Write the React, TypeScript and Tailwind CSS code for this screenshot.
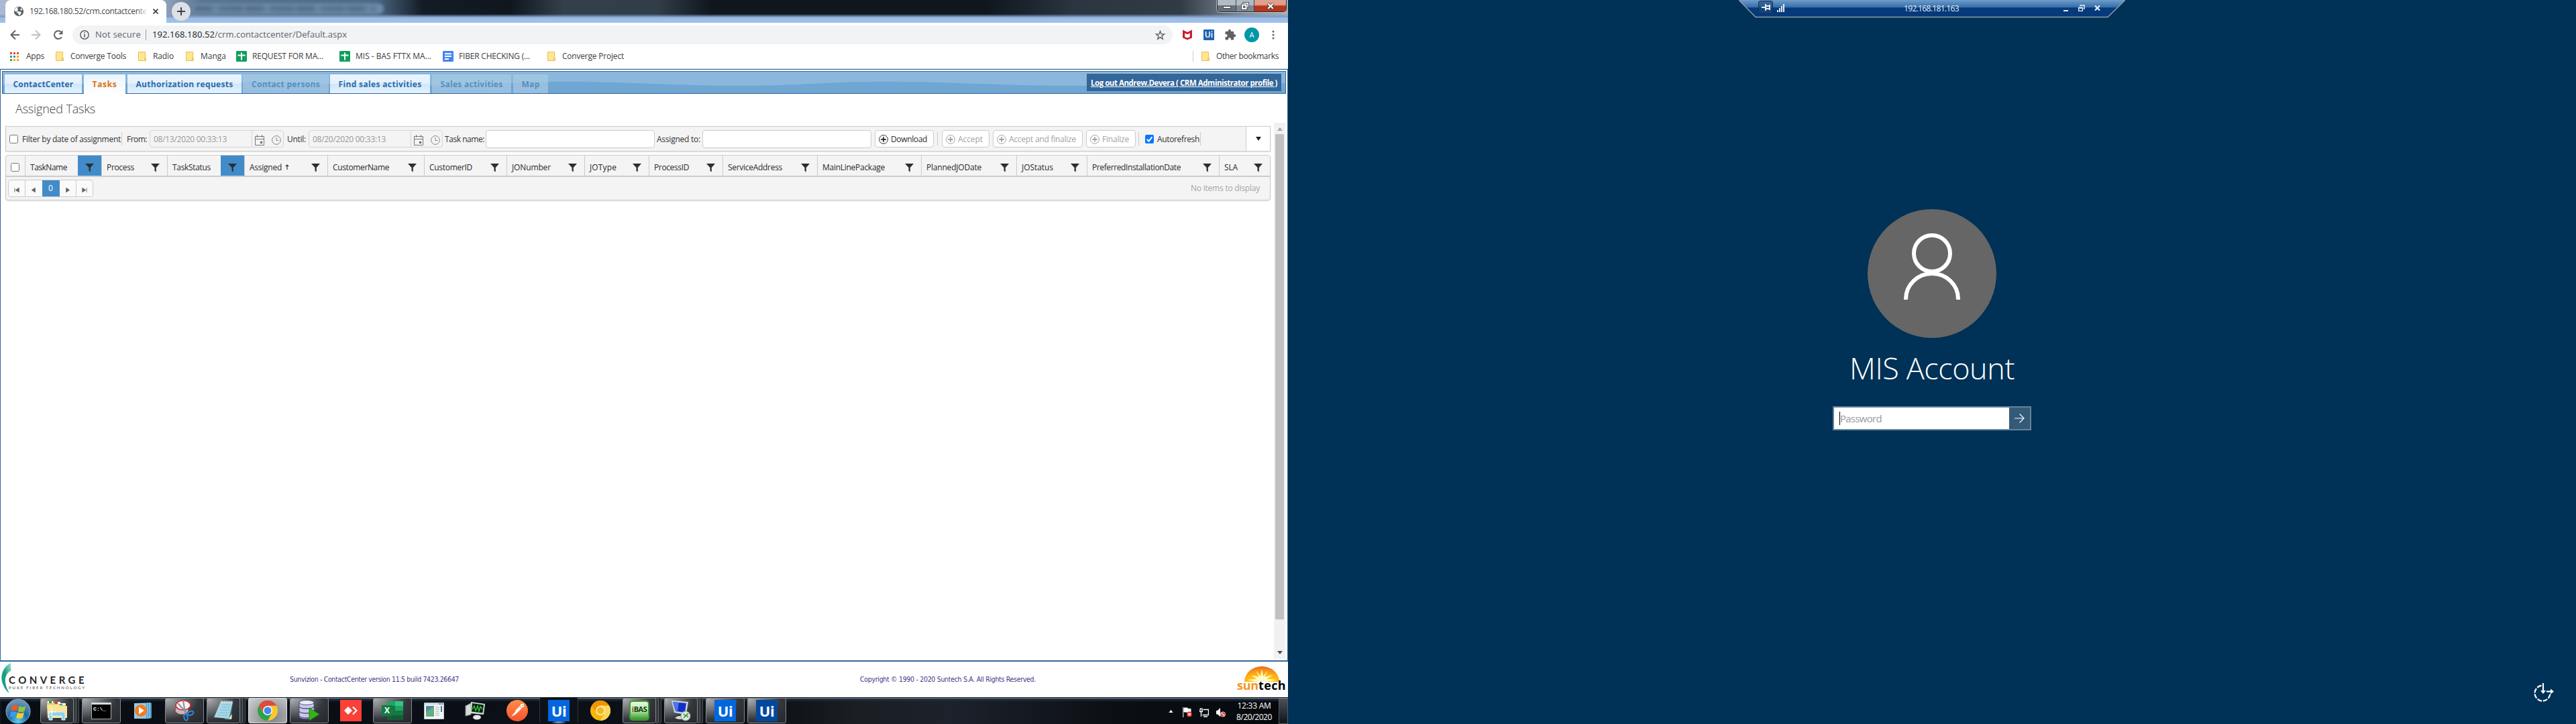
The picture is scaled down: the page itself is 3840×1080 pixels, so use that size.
import React, { useLayoutEffect, useRef, useState } from "react";

/* Text whose tracking adapts so that it fills the width of its box. */
function Fit({ className, children }: { className: string; children: string }) {
  const outer = useRef<HTMLSpanElement>(null);
  const inner = useRef<HTMLSpanElement>(null);
  const [spacing, setSpacing] = useState(0);
  useLayoutEffect(() => {
    if (!outer.current || !inner.current) return;
    const room = outer.current.getBoundingClientRect().width;
    const natural = inner.current.getBoundingClientRect().width;
    setSpacing((room - natural) / children.length);
  }, [children]);
  return (
    <span ref={outer} className={"block shrink-0 whitespace-nowrap " + className}>
      <span ref={inner} style={{ letterSpacing: spacing }}>
        {children}
      </span>
    </span>
  );
}

const Folder = ({ className }: { className: string }) => (
  <svg viewBox="0 0 12 14" className={"h-[14px] w-[12px] shrink-0 " + className}>
    <path d="M.5.5h10v9h1v4H.5z" fill="#ffe694" stroke="#e9c04c" />
    <path d="M9.5 13V9.7h1.8" fill="none" stroke="#e9c04c" />
  </svg>
);
const Sheet = ({ className }: { className: string }) => (
  <svg viewBox="0 0 16 16" className={"size-4 shrink-0 " + className}>
    <rect width="16" height="16" rx="1.2" fill="#10a05c" />
    <path d="M2.5 6.5h11M8 2.5v11" stroke="#fff" strokeWidth="1.9" />
  </svg>
);
const Doc = ({ className }: { className: string }) => (
  <svg viewBox="0 0 16 16" className={"size-4 shrink-0 " + className}>
    <rect width="16" height="16" rx="1.2" fill="#4285f4" />
    <path d="M3 4.2h10M3 8h10M3 12h6" stroke="#fff" strokeWidth="1.9" />
  </svg>
);

function TitleStrip() {
  return (
    <div className="relative flex h-[34px] shrink-0 overflow-hidden bg-[#0f161e]">
      <div className="absolute inset-0 bg-[linear-gradient(90deg,#a9bad2_0px,#8b9fb8_250px,#5b7590_300px,#4d6984_560px,#131c26_630px,#0f161e_760px,#33404c_840px,#313d49_980px,#0f161e_1060px,#0f161e_1470px,#2a3541_1600px,#303b46_1760px,#87939f_1860px,#a5b1bd_1920px)]" />
      <div className="absolute left-[284px] top-[5px] h-[16px] w-[288px] rounded-full bg-[#6d8bab] blur-[2px]" />
      <div className="absolute left-[290px] top-[9px] h-[8px] w-[270px] bg-[repeating-linear-gradient(90deg,#3f566e_0px,#41586f_24px,#6d8bab_32px,#4a627b_38px,#40586f_70px,#6d8bab_76px)] opacity-60 blur-[3px]" />
      <div className="absolute inset-x-0 bottom-0 h-[13px] bg-[linear-gradient(180deg,transparent_0px,#7e9cc2_4px,#9cbde6_6px,#a0c0ea_13px)]" />
      <div className="relative ml-2 flex h-[34px] w-[240px] items-center rounded-t-[8px] bg-white">
        <svg viewBox="0 0 16 16" className="ml-3 size-4 shrink-0">
          <circle cx="8" cy="8" r="7.2" fill="#5f6368" />
          <path d="M7.5 1.8 5.6 4l1.7 1.2L5.2 7.6 8 8.3l3 .2.7 2-2.6 3.4-1-.2-.5-2.4-1.7-.9-1-2.2-3.3-.8C1.9 4 4.200 1.600 7.500 1.800zM11 3l2.300 2.100-.6 1.600-2.200-1z" fill="#fff" />
        </svg>
        <div className="relative ml-2 w-[176px]">
          <Fit className="w-[175px] text-[12px] leading-5 text-[#45484c]">192.168.180.52/crm.contactcente</Fit>
          <div className="absolute right-0 top-0 h-5 w-4 bg-linear-to-r from-transparent to-white" />
        </div>
        <svg viewBox="0 0 8 8" className="ml-2 size-[8px] shrink-0" stroke="#3c4043" strokeWidth="1.7">
          <path d="M.5.5l7 7m0-7l-7 7" />
        </svg>
      </div>
      <div className="relative ml-[8px] mt-[3px] flex size-7 items-center justify-center rounded-full bg-[#dde1e7]">
        <svg viewBox="0 0 12 12" className="size-3" stroke="#3c4043" strokeWidth="2">
          <path d="M6 0v12M0 6h12" />
        </svg>
      </div>
      <div className="relative ml-auto mr-[2px] flex h-[18px] w-[104px] overflow-hidden rounded-b-[5px] border border-t-0 border-[#272e35] text-white shadow-[0_0_0_1px_#b4bec7]">
        <div className="flex w-[28px] items-center justify-center border-r border-[#3d4650] bg-linear-to-b from-[#b3bcc4] from-45% to-[#65717d] to-50%">
          <div className="mt-1 h-[4px] w-[12px] border border-[#474a52] bg-white" />
        </div>
        <div className="flex w-[27px] items-center justify-center border-r border-[#3d4650] bg-linear-to-b from-[#b3bcc4] from-45% to-[#7d8994] to-50%">
          <svg viewBox="0 0 12 12" className="size-3" fill="#fff" stroke="#474a52">
            <path d="M3 .5h8.500v8H3z" />
            <path d="M.5 3H9v8.500H.5z" />
            <path d="M3.500 6h2.500v2.500H3.500z" fill="#8c959e" />
          </svg>
        </div>
        <div className="flex flex-1 items-center justify-center bg-linear-to-b from-[#e0a08e] from-40% to-[#b8351d] to-55%">
          <svg viewBox="0 0 12 10" className="h-[10px] w-3">
            <path d="M2 1l8 8m0-8L2 9" stroke="#4b3f44" strokeWidth="4" />
            <path d="M2.300 1.300l7.400 7.400m0-7.400L2.300 8.700" stroke="#fff" strokeWidth="2.300" />
          </svg>
        </div>
      </div>
    </div>
  );
}

function Toolbar() {
  return (
    <div className="flex h-[36px] shrink-0 items-center bg-white">
      <svg viewBox="0 0 80 16" className="ml-[15px] h-4 w-[80px] shrink-0" fill="none" strokeWidth="2">
        <path d="M14 8H1.500M8 1.500L1.500 8 8 14.500" stroke="#5f6368" />
        <path d="M32 8h12.500M38 1.500L44.500 8 38 14.500" stroke="#bdc0c4" />
        <path d="M77 11.200A6 6 0 1 1 76.500 4" stroke="#5f6368" />
        <path d="M78.500 1v6.300h-6.300z" fill="#5f6368" />
      </svg>
      <div className="ml-[13px] flex h-7 w-[1640px] items-center rounded-full bg-[#f1f3f4]">
        <svg viewBox="0 0 14 14" className="ml-[11px] size-[14px] shrink-0" fill="none" stroke="#5f6368" strokeWidth="1.500">
          <circle cx="7" cy="7" r="6.200" />
          <path d="M7 6v4.500M7 3.300v1.500" strokeWidth="1.700" />
        </svg>
        <Fit className="ml-[9px] w-[68px] text-[13px] text-[#5f6368]">Not secure</Fit>
        <div className="ml-[7px] h-4 w-px bg-[#9aa0a6]" />
        <div className="ml-[9px] flex text-[13px]">
          <Fit className="w-[93px] text-[#202124]">192.168.180.52</Fit>
          <Fit className="w-[197px] text-[#5f6368]">/crm.contactcenter/Default.aspx</Fit>
        </div>
        <svg viewBox="0 0 16 16" className="ml-auto mr-[11px] size-[15px] shrink-0" fill="none" stroke="#5f6368" strokeWidth="1.500">
          <path d="M8 1.500l1.700 4.600 4.800.2-3.800 3 1.300 4.800L8 11.300l-4 2.800 1.300-4.800-3.800-3 4.800-.2z" />
        </svg>
      </div>
      <svg viewBox="0 0 14 16" className="ml-[15px] h-4 w-[14px] shrink-0">
        <path d="M0 .5l7 3.500 7-3.500v12L7 15.500 0 12.500zM3.200 5.400v5.500L7 12.600l3.800-1.700V5.400L7 7.200z" fill="#c8202f" fillRule="evenodd" />
      </svg>
      <div className="ml-[17px] flex size-4 items-center justify-center rounded-[1px] bg-[#1f63ae] text-[12px] font-semibold leading-4 text-white">Ui</div>
      <svg viewBox="0 0 24 24" className="ml-[15px] size-[18px] shrink-0" fill="#5f6368">
        <path d="M20.500 11H19V7a2 2 0 0 0-2-2h-4V3.500a2.500 2.500 0 0 0-5 0V5H4a2 2 0 0 0-2 2v3.800h1.500a2.700 2.700 0 0 1 0 5.400H2V20a2 2 0 0 0 2 2h3.800v-1.500a2.700 2.700 0 0 1 5.400 0V22H17a2 2 0 0 0 2-2v-4h1.500a2.500 2.500 0 0 0 0-5z" />
      </svg>
      <div className="ml-[12px] flex size-[22px] items-center justify-center rounded-full bg-[#0097a7] text-[11px] text-white">A</div>
      <svg viewBox="0 0 4 14" className="ml-[19px] h-[14px] w-1" fill="#5f6368">
        <circle cx="2" cy="2" r="1.500" />
        <circle cx="2" cy="7" r="1.500" />
        <circle cx="2" cy="12" r="1.500" />
      </svg>
    </div>
  );
}

function Bookmarks() {
  return (
    <div className="flex h-[32px] shrink-0 items-center bg-white pb-[4px] text-[12px] text-[#3c4043]">
      <svg viewBox="0 0 13 13" className="ml-[15px] size-[13px] shrink-0">
        {["#ea4335", "#ea4335", "#ea4335", "#34a853", "#4285f4", "#f5a80b", "#34a853", "#f5a80b", "#f5a80b"].map((c, i) => (
          <rect key={i} x={(i % 3) * 5} y={Math.floor(i / 3) * 5} width="3" height="3" fill={c} />
        ))}
      </svg>
      <Fit className="ml-[11px] w-[27px]">Apps</Fit>
      <Folder className="ml-[17px]" />
      <Fit className="ml-[10px] w-[83px]">Converge Tools</Fit>
      <Folder className="ml-[18px]" />
      <Fit className="ml-[10px] w-[31px]">Radio</Fit>
      <Folder className="ml-[18px]" />
      <Fit className="ml-[10px] w-[38px]">Manga</Fit>
      <Sheet className="ml-[15px]" />
      <Fit className="ml-[8px] w-[106px]">REQUEST FOR MA...</Fit>
      <Sheet className="ml-[24px]" />
      <Fit className="ml-[8px] w-[113px]">MIS - BAS FTTX MA...</Fit>
      <Doc className="ml-[17px]" />
      <Fit className="ml-[8px] w-[106px]">FIBER CHECKING (...</Fit>
      <Folder className="ml-[26px]" />
      <Fit className="ml-[10px] w-[92px]">Converge Project</Fit>
      <div className="ml-auto h-4 w-px bg-[#c9ccd0]" />
      <Folder className="ml-[12px]" />
      <Fit className="ml-[10px] mr-[14px] w-[93px]">Other bookmarks</Fit>
    </div>
  );
}

const tabOn = "bg-[linear-gradient(180deg,#eaf4fe_0%,#e4f1fd_48%,#cfe6fb_52%,#e6f3fe_100%)] text-[#2d6ba6] ";
const tabOff = "bg-[#a9cbe6]/70 text-[#5590c0] ";
const tabs = [
  { label: "ContactCenter", box: tabOn + "ml-[3px] w-[115px]", text: "w-[90px]" },
  { label: "Tasks", box: "ml-[3px] w-[62px] h-[30px] pb-[2px] bg-linear-to-b from-[#e9f4fe] to-white text-[#e0700f]", text: "w-[37px]" },
  { label: "Authorization requests", box: tabOn + "ml-[3px] w-[170px]", text: "w-[145px]" },
  { label: "Contact persons", box: tabOff + "ml-[2px] w-[128px]", text: "w-[102px]" },
  { label: "Find sales activities", box: tabOn + "ml-[2px] w-[149px]", text: "w-[124px]" },
  { label: "Sales activities", box: tabOff + "ml-[3px] w-[118px]", text: "w-[93px]" },
  { label: "Map", box: tabOff + "ml-[3px] w-[52px]", text: "w-[27px]" },
];

function TabBar() {
  return (
    <div className="relative mx-[2px] mt-[2px] flex h-[34px] shrink-0 border border-[#33679c] bg-[#8ab7db]">
      <svg viewBox="0 0 1914 32" preserveAspectRatio="none" className="absolute inset-0 h-full w-full">
        <path d="M0 20C120 20 220 15 340 15S520 21 620 21 740 15 840 15s160 6 260 6 120-6 220-6 160 6 300 6 180-4 294-4V32H0z" fill="#6fa6d2" />
      </svg>
      <div className="relative flex pt-[4px]">
        {tabs.map((t) => (
          <div key={t.label} className={"flex h-[28px] shrink-0 items-center justify-center text-[12px] font-bold " + t.box}>
            <Fit className={"pt-px " + t.text}>{t.label}</Fit>
          </div>
        ))}
      </div>
      <div className="relative ml-auto mr-[6px] mt-[3px] flex h-[26px] w-[290px] items-center justify-center bg-[#336699]">
        <Fit className="w-[278px] pt-px text-[11.500px] font-bold text-white underline">Log out Andrew.Devera ( CRM Administrator profile )</Fit>
      </div>
    </div>
  );
}

const Sep = ({ className }: { className: string }) => <div className={"h-5 w-px shrink-0 bg-[#ccc] " + className} />;

function DateBox({ value, className }: { value: string; className: string }) {
  return (
    <div className={"flex h-[26px] w-[200px] shrink-0 items-center rounded-[4px] border border-[#d6d6d6] " + className}>
      <Fit className="ml-[5px] w-[109px] pt-[2px] text-[#999]">{value}</Fit>
      <div className="ml-[37px] h-6 w-px bg-[#d6d6d6]" />
      <svg viewBox="0 0 14 16" className="ml-[4px] mt-[3px] h-4 w-[14px]" fill="none" stroke="#777">
        <path d="M.5 2.500h13v13H.5zM0 6.500h14M3.500 0v4M10.500 0v4" />
        <path d="M8 10h3v3H8z" fill="#666" stroke="none" />
      </svg>
      <svg viewBox="0 0 14 14" className="ml-[11px] mt-[3px] size-[14px]" fill="none" stroke="#888">
        <circle cx="7" cy="7" r="6.400" />
        <path d="M7 3v4.500h3.500" />
      </svg>
    </div>
  );
}

function ToolButton({ label, box, text, off }: { label: string; box: string; text: string; off?: boolean }) {
  return (
    <div className={"flex h-[26px] shrink-0 items-center rounded-[4px] border border-[#ccc] bg-white " + (off ? "text-[#a3a3a3] " : "text-[#2e2e2e] ") + box}>
      <svg viewBox="0 0 14 14" className="ml-[5px] mt-[2px] size-[14px] shrink-0" fill="none" stroke="currentColor">
        <circle cx="7" cy="7" r="6.400" />
        <path d="M7 3.300v7.400M3.300 7h7.400" strokeWidth="1.800" />
      </svg>
      <Fit className={"ml-[4px] pt-[2px] " + text}>{label}</Fit>
    </div>
  );
}

function FilterBar() {
  return (
    <div className="flex h-[38px] w-[1886px] shrink-0 items-center border border-[#ccc] bg-[#f4f4f4] text-[12px] text-[#333] shadow-[0_1px_2px_#0000001f]">
      <div className="ml-[5px] size-[13px] shrink-0 rounded-[2.500px] border border-[#767676] bg-white" />
      <Fit className="ml-[6px] w-[147px] pt-px">Filter by date of assignment</Fit>
      <Sep className="ml-[1px]" />
      <Fit className="ml-[7px] w-[30px] pt-[2px]">From:</Fit>
      <DateBox className="ml-[4px]" value="08/13/2020 00:33:13" />
      <Fit className="ml-[5px] w-[28px] pt-[2px]">Until:</Fit>
      <DateBox className="ml-[4px]" value="08/20/2020 00:33:13" />
      <Fit className="ml-[3px] w-[59px] pt-[2px]">Task name:</Fit>
      <div className="ml-[2px] h-[27px] w-[252px] shrink-0 rounded-[4px] border border-[#ccc] bg-white" />
      <Fit className="ml-[3px] w-[65px] pt-[2px]">Assigned to:</Fit>
      <div className="ml-[3px] h-[27px] w-[252px] shrink-0 rounded-[4px] border border-[#ccc] bg-white" />
      <ToolButton label="Download" box="ml-[5px] w-[88px]" text="w-[54px]" />
      <Sep className="ml-[5px]" />
      <ToolButton off label="Accept" box="ml-[6px] w-[71px]" text="w-[37px]" />
      <ToolButton off label="Accept and finalize" box="ml-[5px] w-[134px]" text="w-[100px]" />
      <ToolButton off label="Finalize" box="ml-[5px] w-[74px]" text="w-[40px]" />
      <Sep className="ml-[4px]" />
      <svg viewBox="0 0 13 13" className="ml-[9px] size-[13px] shrink-0">
        <rect width="13" height="13" rx="2" fill="#0a75ff" />
        <path d="M2.800 6.800l2.700 2.900 4.900-6.400" fill="none" stroke="#fff" strokeWidth="2" />
      </svg>
      <Fit className="ml-[5px] w-[63px] pt-px">Autorefresh</Fit>
      <Sep className="ml-[1px]" />
      <div className="ml-auto flex h-[36px] w-[36px] items-center justify-center border-l border-[#ccc] bg-white">
        <svg viewBox="0 0 8 6" className="h-[6px] w-2" fill="#222">
          <path d="M0 0h8L4 6z" />
        </svg>
      </div>
    </div>
  );
}

const columns = [
  { label: "TaskName", box: "w-[114px]", text: "w-[55px]", hot: true },
  { label: "Process", box: "w-[98px]", text: "w-[41px]" },
  { label: "TaskStatus", box: "w-[115px]", text: "w-[57px]", hot: true },
  { label: "Assigned", box: "w-[124px]", text: "w-[48px]", sorted: true },
  { label: "CustomerName", box: "w-[144px]", text: "w-[84px]" },
  { label: "CustomerID", box: "w-[123px]", text: "w-[64px]" },
  { label: "JONumber", box: "w-[116px]", text: "w-[58px]" },
  { label: "JOType", box: "w-[96px]", text: "w-[40px]" },
  { label: "ProcessID", box: "w-[110px]", text: "w-[52px]" },
  { label: "ServiceAddress", box: "w-[141px]", text: "w-[81px]" },
  { label: "MainLinePackage", box: "w-[155px]", text: "w-[93px]" },
  { label: "PlannedJODate", box: "w-[142px]", text: "w-[82px]" },
  { label: "JOStatus", box: "w-[105px]", text: "w-[47px]" },
  { label: "PreferredInstallationDate", box: "w-[197px]", text: "w-[132px]" },
  { label: "SLA", box: "w-[76px]", text: "w-[20px]" },
];

const pagerIcons = [
  "M1 1.500v7M8 1.500v7L2.500 5z",
  "M7 1.500v7L1.500 5z",
  "",
  "M3 1.500v7L8.500 5z",
  "M9 1.500v7M2 1.500v7L7.500 5z",
];

function Grid() {
  return (
    <div className="mt-[5px] flex h-[68px] w-[1886px] shrink-0 flex-col overflow-hidden rounded-[4px] border border-[#ccc] bg-[#f4f4f4] text-[12px] text-[#2b2b2b] shadow-[0_1px_2px_#0000001f]">
      <div className="flex h-[32px] shrink-0 border-b-2 border-[#ccc]">
        <div className="flex w-[28px] shrink-0 items-center justify-center pr-[2px] pt-1">
          <div className="size-[13px] rounded-[2.500px] border border-[#767676] bg-white" />
        </div>
        {columns.map((c) => (
          <div key={c.label} className={"flex shrink-0 items-center border-l border-[#ccc] pl-[7px] " + c.box}>
            <Fit className={"mt-[5px] " + c.text}>{c.label}</Fit>
            {c.sorted && (
              <svg viewBox="0 0 6 8" className="ml-[5px] mt-1 h-2 w-[6px]" fill="none" stroke="#333" strokeWidth="1.200">
                <path d="M3 8V1M.8 3.200L3 1l2.200 2.200" />
              </svg>
            )}
            <div className={"ml-auto flex h-full w-[35px] items-center justify-center " + (c.hot ? "bg-[#428bca]" : "")}>
              <svg viewBox="0 0 13 13" className="mt-[6px] size-[13px]" fill="#2e2e2e">
                <path d="M0 0h13L7.800 6v6.500L5.500 11V6z" />
              </svg>
            </div>
          </div>
        ))}
      </div>
      <div className="flex flex-1 items-center">
        <div className="ml-[3px] flex h-[26px] w-[127px] overflow-hidden rounded-[4px] border border-[#ccc] bg-[#fafafa]">
          {pagerIcons.map((d, i) =>
            d ? (
              <div key={i} className={"flex flex-1 items-center justify-center " + (i === 1 || i === 4 ? "border-l border-[#ccc]" : "")}>
                <svg viewBox="0 0 10 10" className="mt-1 size-[9px]" fill="#666" stroke="#666" strokeWidth="1">
                  <path d={d} />
                </svg>
              </div>
            ) : (
              <div key={i} className="flex w-[26px] items-center justify-center bg-[#428bca] text-white">0</div>
            )
          )}
        </div>
        <Fit className="ml-auto mr-[15px] w-[103px] text-[#a5a5a5]">No items to display</Fit>
      </div>
    </div>
  );
}

function Scrollbar() {
  return (
    <div className="mr-[3px] flex h-[800px] w-[17px] flex-col items-center justify-between bg-[#f1f1f1]">
      <svg viewBox="0 0 8 5" className="mt-[7px] h-[5px] w-2" fill="#a3a3a3">
        <path d="M0 5h8L4 0z" />
      </svg>
      <div className="mb-auto mt-[5px] h-[724px] w-[13px] bg-[#c1c1c1]" />
      <svg viewBox="0 0 8 5" className="mb-[7px] h-[5px] w-2" fill="#505050">
        <path d="M0 0h8L4 5z" />
      </svg>
    </div>
  );
}

function Footer() {
  return (
    <div className="flex h-[53px] shrink-0 bg-white font-['DejaVu_Sans_Condensed','DejaVu_Sans',sans-serif] text-[10.500px] text-[#3e3787]">
      <div className="flex w-[432px]">
        <svg viewBox="0 0 16 48" className="ml-[2px] mt-[2px] h-[46px] w-4 shrink-0">
          <defs>
            <linearGradient id="leaf" x1="0" y1="1" x2="1" y2="0">
              <stop offset="0" stopColor="#1f9f87" />
              <stop offset=".5" stopColor="#15a085" />
              <stop offset="1" stopColor="#a8dccf" />
            </linearGradient>
          </defs>
          <path d="M14 0C2 6-4 22 3 35c2 5 5 9 9 12C7 38 3 27 8 18c2-3 4-5 7-6z" fill="url(#leaf)" />
        </svg>
        <div className="ml-[-5px] mt-[19px] flex flex-col font-['Lato',sans-serif]">
          <Fit className="w-[117px] text-[15px] font-bold leading-[16px] text-[#262626]">CONVERGE</Fit>
          <Fit className="w-[115px] text-[6px] font-bold leading-[7px] text-[#777]">PURE FIBER TECHNOLOGY</Fit>
        </div>
      </div>
      <Fit className="mt-[19px] w-[252px]">Sunvizion - ContactCenter version 11.5 build 7423.26647</Fit>
      <Fit className="ml-[598px] mt-[19px] w-[262px]">Copyright © 1990 - 2020 Suntech S.A. All Rights Reserved.</Fit>
      <div className="ml-auto mr-[3px] mt-[7px] flex w-[73px] flex-col items-center">
        <svg viewBox="0 0 52 23" className="h-[23px] w-[52px] shrink-0">
          <defs>
            <radialGradient id="sun" cx=".5" cy="1" r="1">
              <stop offset="0" stopColor="#ffe81a" />
              <stop offset=".5" stopColor="#fdb515" />
              <stop offset="1" stopColor="#ee6a23" />
            </radialGradient>
          </defs>
          <path d="M0 23a26 23 0 0 1 52 0z" fill="url(#sun)" />
          <path d="M4 20l15-1-9-6 12 3-5-10 7 9 2-11 2 11 7-9-5 10 12-3-9 6 15 1-15 3H19z" fill="#fffbd0" />
        </svg>
        <div className="mt-[-2px] flex font-['Open_Sans',sans-serif] text-[18px] font-bold leading-[15px]">
          <Fit className="w-[32px] text-[#f7941d]">sun</Fit>
          <Fit className="w-[41px] text-black">tech</Fit>
        </div>
      </div>
    </div>
  );
}

const UiTile = ({ className }: { className: string }) => (
  <div className={"flex size-8 items-center justify-center pb-px text-[22px] font-bold leading-8 tracking-[-0.5px] text-white " + className}>Ui</div>
);

const ExplorerIcon = () => (
  <svg viewBox="0 0 32 30" className="h-[30px] w-8">
    <path d="M1 2h10l2 3h16v19H3z" fill="#e8c75e" />
    <path d="M2 1h8v3H2zM13 2h8v3h-8zM20 4h9v3h-9z" fill="#fff" />
    <path d="M4 1h4v3H4z" fill="#2b9b3d" />
    <path d="M13 2h4v3h-4z" fill="#d63b26" />
    <path d="M20 5h4v2h-4z" fill="#2990d4" />
    <path d="M1 6h18l2 2h10v18H2z" fill="#f8e596" />
    <path d="M4 29V20q0-3 3-3h18q3 0 3 3v9h-5v-6H9v6z" fill="#8fd0ee" stroke="#d6f0fb" />
    <path d="M8 11v12M2 17h12" stroke="#fff" strokeWidth="1.200" />
  </svg>
);
const CmdIcon = () => (
  <div className="h-[25px] w-[30px] border border-[#a9b0b6] border-t-[3px] border-t-[#d4dce4] bg-black pl-[2px] pt-[2px] font-['Liberation_Mono',monospace] text-[8px] font-bold leading-[9px] text-white">C:\_</div>
);
const MediaIcon = () => (
  <svg viewBox="0 0 28 26" className="h-[26px] w-7">
    <path d="M1 2l24-1 2 1v22l-3 1H1z" fill="#4c9bc8" />
    <path d="M1 2h18v23H1z" fill="#8ecbea" />
    <path d="M21 1v24M24 1v23" stroke="#b8def2" />
    <circle cx="11" cy="13" r="9" fill="#f47b20" />
    <path d="M8 7.500l8 5.500-8 5.500z" fill="#fff" />
  </svg>
);
const SnipIcon = () => (
  <svg viewBox="0 0 30 32" className="h-8 w-[30px]">
    <ellipse cx="11" cy="15" rx="10" ry="7" fill="#b9bcc0" stroke="#c22a2a" />
    <ellipse cx="13" cy="8" rx="11" ry="7" fill="#f3f3f5" stroke="#d8262c" strokeWidth="1.600" />
    <path d="M5 5l14 15M13 1l3 18" stroke="#8a8f94" strokeWidth="2" />
    <ellipse cx="24" cy="20" rx="4.500" ry="2.800" transform="rotate(-25 24 20)" fill="none" stroke="#2b84d6" strokeWidth="2.200" />
    <ellipse cx="17" cy="26" rx="2.600" ry="4.600" transform="rotate(-15 17 26)" fill="none" stroke="#2b84d6" strokeWidth="2.200" />
  </svg>
);
const NotepadIcon = () => (
  <svg viewBox="0 0 32 30" className="h-[30px] w-8">
    <path d="M12 2h18l-3 25-2 2L18 28z" fill="#3e7f93" />
    <path d="M12 2h18l-6 25L2 25z" fill="#a8d8e4" />
    <path d="M14 6h13M13 10h13M11 14h14M9 18h15M7 22h16" stroke="#7fbccc" />
    <path d="M12 2h18" stroke="#dfe6e8" strokeWidth="3" strokeDasharray="1.500 1" />
    <path d="M24 27l5-7-1 8z" fill="#fff3b0" />
  </svg>
);
const ChromeIcon = () => (
  <svg viewBox="0 0 30 30" className="size-[30px]">
    <circle cx="15" cy="15" r="15" fill="#fbc62d" />
    <path d="M15 15L2 7.500A15 15 0 0 1 28 7.500H15z" fill="#dd4b3e" />
    <path d="M2 7.500a15 15 0 0 0 13 22.500l6.200-11L8.800 19z" fill="#2ba24c" />
    <path d="M2 7.500L9 19l6-11.500h13A15 15 0 0 0 2 7.500z" fill="#dd4b3e" />
    <circle cx="15" cy="15" r="7" fill="#fff" />
    <circle cx="15" cy="15" r="5.500" fill="#4688f1" />
  </svg>
);
const DbIcon = () => (
  <svg viewBox="0 0 32 32" className="size-8">
    <path d="M1 4v21c0 5 22 5 22 0V4z" fill="#c9c9e4" />
    <path d="M1 10c2 4 20 4 22 0M1 17c2 4 20 4 22 0M1 24c2 4 20 4 22 0" fill="none" stroke="#4b4b82" strokeWidth="1.500" />
    <ellipse cx="12" cy="4" rx="11" ry="3.500" fill="#ececf8" stroke="#51518a" />
    <path d="M1 4v21c0 5 22 5 22 0V4" fill="none" stroke="#51518a" />
    <path d="M16 12l15 9.500L16 31z" fill="#35b318" stroke="#1c7d0c" />
  </svg>
);
const AnyDeskIcon = () => (
  <svg viewBox="0 0 32 32" className="size-8">
    <path d="M0 0h32v32H0z" fill="#fb4136" />
    <path d="M6 16l6-6 6 6-6 6z" fill="#fff" />
    <path d="M19 10.500l5.500 5.500-5.500 5.500" fill="none" stroke="#fff" strokeWidth="2.200" />
  </svg>
);
const ExcelIcon = () => (
  <div className="relative h-7 w-8">
    <svg viewBox="0 0 32 28" className="h-7 w-8">
      <path d="M8 0h12v7H8z" fill="#21a366" />
      <path d="M20 0h12v7H20z" fill="#33c481" />
      <path d="M8 7h12v14H8z" fill="#107c41" />
      <path d="M20 7h12v7H20z" fill="#21a366" />
      <path d="M20 14h12v7H20z" fill="#107c41" />
      <path d="M8 21h24v7H8z" fill="#185c37" />
    </svg>
    <div className="absolute left-0 top-[6px] flex size-4 items-center justify-center bg-[#107c41] text-[12px] font-bold text-white">X</div>
  </div>
);
const WindowIcon = () => (
  <svg viewBox="0 0 30 25" className="h-[25px] w-[30px]">
    <path d="M.5.5h29v24H.5z" fill="#f6f7f8" stroke="#b9bfc4" />
    <path d="M1 1h28v2.500H1z" fill="#cfdbe6" />
    <path d="M22 2h1.500M24.500 2H26M27 2h1.500" stroke="#3e5d8a" strokeWidth="1.500" />
    <path d="M3 5h12v16H3z" fill="#4e8aa0" />
    <path d="M3 14l12-8v15H3z" fill="#66ac84" />
    <path d="M17 7h6M17 10h6M17 13h6M17 16h6M17 19h6" stroke="#aaa" />
    <path d="M26 5v9" stroke="#3b7ba5" strokeWidth="2" />
  </svg>
);
const PerfIcon = () => (
  <svg viewBox="0 0 32 28" className="h-7 w-8">
    <path d="M1 7l8-4v17l-8 2z" fill="#d7dadb" stroke="#7e8486" />
    <path d="M9 1l21 3-2 16-20-2z" fill="#d5d9d8" />
    <path d="M11 3l17 2.500-1.500 12L10 15.500z" fill="#0d2210" />
    <path d="M11 12l3-5 2 7 3-7 2 8 2-7 3 4" fill="none" stroke="#27d63d" strokeWidth="1.300" />
    <ellipse cx="18" cy="24" rx="6" ry="3.500" fill="#e8eaea" />
  </svg>
);
const PostmanIcon = () => (
  <svg viewBox="0 0 32 32" className="size-8">
    <defs>
      <linearGradient id="post" x1="0" y1="0" x2="0" y2="1">
        <stop stopColor="#ff8e4a" />
        <stop offset="1" stopColor="#f9522a" />
      </linearGradient>
    </defs>
    <circle cx="16" cy="16" r="16" fill="url(#post)" />
    <path d="M7 25l4-5 9-9 2 2-9 9z" fill="#fff" />
    <path d="M13 17l8-8m-6 10l8-8" stroke="#fff" strokeWidth="1.200" />
    <circle cx="23.500" cy="8.500" r="2.700" fill="#fff" />
    <path d="M23 8.500h2" stroke="#f9672f" />
  </svg>
);
const CanaryIcon = () => (
  <svg viewBox="0 0 30 30" className="size-[30px]">
    <circle cx="15" cy="15" r="15" fill="#f6b60a" />
    <path d="M2 7.500A15 15 0 0 1 28 7.500H15L9 18z" fill="#ef9400" />
    <path d="M28 7.500A15 15 0 0 1 15 30l6.200-11L15 7.500z" fill="#ffd65a" />
    <circle cx="15" cy="15" r="6.200" fill="#f5b81c" stroke="#fff3c4" strokeWidth="1.500" />
  </svg>
);
const IbasIcon = () => (
  <div className="flex size-[30px] items-center justify-center rounded-[5px] border-2 border-[#3c9a31] bg-linear-to-b from-[#e7f9e0] via-[#b5e8a3] to-[#2f9a28] pb-1 font-['Open_Sans',sans-serif] text-[11px] font-bold tracking-[-0.5px]">
    <span className="text-[#b5411f]">i</span>
    <span className="text-[#123b1a]">BAS</span>
  </div>
);
const RdpIcon = () => (
  <svg viewBox="0 0 32 32" className="size-8">
    <path d="M2 1l25 2-3 19L6 19z" fill="#ccd5dd" />
    <path d="M4 3l20 2-2 14-14-2z" fill="#1230c4" />
    <path d="M4 3l9 1-2 13.500-3-.5z" fill="#4d74ee" />
    <path d="M7 27q7-6 13 0-5 4-13 0z" fill="#d9dddf" />
    <circle cx="23" cy="24" r="7" fill="#dfe5df" stroke="#9da49d" />
    <path d="M20 21l3 3-3 3M27 20l-3 3 3 3" fill="none" stroke="#2c9a2a" strokeWidth="1.600" />
  </svg>
);

type Task = { icon: React.ReactNode; kind: "open" | "stack" | "active" | "plain" | "start" };
const tasks: Task[] = [
  { icon: <ExplorerIcon />, kind: "stack" },
  { icon: <CmdIcon />, kind: "open" },
  { icon: <MediaIcon />, kind: "plain" },
  { icon: <SnipIcon />, kind: "open" },
  { icon: <NotepadIcon />, kind: "stack" },
  { icon: <ChromeIcon />, kind: "active" },
  { icon: <DbIcon />, kind: "open" },
  { icon: <AnyDeskIcon />, kind: "plain" },
  { icon: <ExcelIcon />, kind: "open" },
  { icon: <WindowIcon />, kind: "plain" },
  { icon: <PerfIcon />, kind: "plain" },
  { icon: <PostmanIcon />, kind: "plain" },
  { icon: <UiTile className="bg-[#0067df]" />, kind: "start" },
  { icon: <CanaryIcon />, kind: "plain" },
  { icon: <IbasIcon />, kind: "stack" },
  { icon: <RdpIcon />, kind: "stack" },
  { icon: <UiTile className="bg-[#0067df]" />, kind: "open" },
  { icon: <UiTile className="bg-[#00489d]" />, kind: "open" },
];

const openFace = "border border-[#85898d] bg-[radial-gradient(ellipse_at_0%_0%,#b0b2b5_0%,#6b6e72_35%,#33373b_62%,#24282c_100%)] ";
const taskStyle = {
  open: openFace + "w-[58px]",
  stack: openFace + "w-[50px]",
  active: "border border-[#dfe0e1] bg-[radial-gradient(ellipse_at_60%_75%,#7c7e80_0%,#a0a2a4_45%,#d2d3d4_100%)] w-[58px]",
  plain: "w-[57px]",
  start: "w-[58px] border-x border-[#32373c] bg-[radial-gradient(ellipse_at_50%_110%,#9fc3e8_0%,#0d1218_30%)]",
};

function Taskbar() {
  return (
    <div className="flex h-[40px] shrink-0 border-t border-[#10161c] bg-[linear-gradient(90deg,#0a0e14_0px,#0c1117_1150px,#1b1f24_1280px,#1c222b_1420px,#0c1015_1650px,#05080b_1920px)] shadow-[inset_0_1px_0_#7a8696,inset_0_4px_3px_#273141]">
      <svg viewBox="0 0 38 38" className="ml-[8px] mt-px size-[38px] shrink-0">
        <defs>
          <radialGradient id="orb" cx=".5" cy=".9" r=".8">
            <stop stopColor="#4fd3f5" />
            <stop offset=".5" stopColor="#1769a8" />
            <stop offset="1" stopColor="#6d93b3" />
          </radialGradient>
        </defs>
        <circle cx="19" cy="19" r="18" fill="url(#orb)" stroke="#8fb4cf" />
        <path d="M10 11q5-3 9 0l-2 8q-4-3-9 0z" fill="#ee5a24" />
        <path d="M20.500 11q5 3 10 0l-2 8q-5 3-10 0z" fill="#8cc63f" />
        <path d="M8 20.500q5-3 9 0l-2 8q-4-3-9 0z" fill="#3d9be0" />
        <path d="M18 20.500q5 3 10 0l-2 8q-5 3-10 0z" fill="#fdc92f" />
      </svg>
      <div className="ml-[14px] flex">
        {tasks.map((t, i) => (
          <div key={i} className="flex w-[62px] shrink-0">
            <div className={"flex h-[38px] shrink-0 items-center justify-center rounded-[3px] " + taskStyle[t.kind]}>{t.icon}</div>
            {t.kind === "stack" && (
              <>
                <div className="h-[38px] w-1 rounded-r-[3px] border border-l-0 border-[#62676b] bg-[#33383d]" />
                <div className="h-[38px] w-1 rounded-r-[3px] border border-l-0 border-[#4c5155] bg-[#23282c]" />
              </>
            )}
          </div>
        ))}
      </div>
      <div className="ml-auto flex items-center text-[12px] text-white">
        <svg viewBox="0 0 8 5" className="h-[4px] w-[7px]" fill="#fff">
          <path d="M0 5h8L4 0z" />
        </svg>
        <svg viewBox="0 0 14 15" className="ml-[14px] mt-1 h-[15px] w-[14px]">
          <path d="M.8 0v15M2 1h5l1 1.500h4V8H7L6 7H2z" fill="#fff" stroke="#fff" />
          <circle cx="10" cy="10.500" r="4" fill="#e02b20" />
          <path d="M8.300 8.800l3.400 3.400m0-3.400l-3.400 3.400" stroke="#fff" strokeWidth="1.300" />
        </svg>
        <svg viewBox="0 0 14 14" className="ml-[11px] mt-1 size-[14px]" fill="none" stroke="#fff" strokeWidth="1.400">
          <path d="M5.500 2.500h8v8h-9M6 13h6M2.500 6v7M.8 2.500v3h3.400v-3M1.500 0v3M3.700 0v3" />
        </svg>
        <svg viewBox="0 0 16 14" className="ml-[10px] mt-1 h-[14px] w-4">
          <path d="M1 4h2l4-4v13L3 9.500H1z" fill="#fff" />
          <circle cx="11" cy="9.500" r="3.600" fill="#e02b20" stroke="#fff" strokeWidth=".8" />
          <path d="M9 7.500l4 4" stroke="#fff" strokeWidth="1.200" />
        </svg>
        <div className="ml-[15px] flex flex-col items-center">
          <Fit className="w-[50px] leading-[17px]">12:33 AM</Fit>
          <Fit className="w-[53px] leading-[17px]">8/20/2020</Fit>
        </div>
        <div className="ml-[10px] h-[38px] w-[14px] border border-[#555b61] bg-linear-to-b from-[#4a5057] to-[#12161a]" />
      </div>
    </div>
  );
}

function Browser() {
  return (
    <div className="flex h-[1080px] w-[1920px] shrink-0 flex-col bg-white">
      <TitleStrip />
      <Toolbar />
      <Bookmarks />
      <div className="h-px shrink-0 bg-[#d3d6da]" />
      <div className="flex min-h-0 flex-1 flex-col border border-b-2 border-[#33679c]">
        <TabBar />
        <div className="flex flex-1 justify-between">
          <div className="ml-[7px] flex flex-col">
            <div className="flex h-[48px] items-center pb-[3px] pl-[15px]">
              <Fit className="w-[119px] text-[18px] font-light text-[#444]">Assigned Tasks</Fit>
            </div>
            <FilterBar />
            <Grid />
          </div>
          <div className="pt-[43px]">
            <Scrollbar />
          </div>
        </div>
      </div>
      <Footer />
      <Taskbar />
    </div>
  );
}

function ConnectionBar() {
  return (
    <div className="relative h-[27px] w-[576px]">
      <svg viewBox="0 0 576 27" className="absolute inset-0 h-[27px] w-[576px]">
        <defs>
          <linearGradient id="conn" x1="0" y1="0" x2="0" y2="1">
            <stop stopColor="#6f9dcb" />
            <stop offset=".42" stopColor="#356ea8" />
            <stop offset=".46" stopColor="#053a7b" />
            <stop offset="1" stopColor="#06397a" />
          </linearGradient>
        </defs>
        <path d="M0 0h576l-26 25.500H25z" fill="url(#conn)" />
        <path d="M0 0l25 25.500h525L576 0" fill="none" stroke="#8e9cab" strokeWidth="1.400" />
      </svg>
      <div className="relative flex h-[24px] items-center text-[#e8eef5]">
        <div className="ml-[29px] mb-[3px] flex h-[20px] w-[22px] items-center justify-center rounded-[3px] border border-[#132f52] bg-[#1d4a7c]/60">
          <svg viewBox="0 0 13 10" className="h-[10px] w-[13px]" fill="none" stroke="currentColor" strokeWidth="2">
            <path d="M0 5h5M6 0v10M6 3h6M6 7h6M12 1v8" />
          </svg>
        </div>
        <svg viewBox="0 0 12 12" className="ml-[6px] size-3" fill="currentColor">
          <path d="M0 9h2v3H0zM3 6h2v6H3zM6 3h2v9H6zM9 0h2v12H9z" />
        </svg>
        <Fit className="ml-[177px] mt-[2px] w-[82px] text-[12px]">192.168.181.163</Fit>
        <div className="ml-[156px] mt-[8px] h-[2px] w-[7px] bg-[#e8eef5]" />
        <svg viewBox="0 0 10 10" className="ml-[15px] mb-px size-[10px]" fill="none" stroke="currentColor">
          <path d="M3 2.500V1h6v5H7.500" strokeWidth="1.500" />
          <path d="M.7 4.500h5.600v4.800H.7zM.7 5h5.600" strokeWidth="1.300" />
        </svg>
        <svg viewBox="0 0 9 8" className="ml-[14px] h-2 w-[9px]" stroke="currentColor" strokeWidth="2.200">
          <path d="M1 0.500l7 7m0-7l-7 7" />
        </svg>
      </div>
    </div>
  );
}

function LoginScreen() {
  return (
    <div className="flex h-[1080px] w-[1920px] shrink-0 flex-col items-center bg-[#003156]">
      <ConnectionBar />
      <svg viewBox="0 0 192 192" className="mt-[285px] size-[192px] shrink-0">
        <circle cx="96" cy="96" r="96" fill="#666" />
        <g fill="none" stroke="#fff" strokeWidth="6">
          <circle cx="96" cy="66" r="27" />
          <path d="M57 135v-1a39 38 0 0 1 78 0v1" />
        </g>
      </svg>
      <Fit className="mt-[15px] w-[246px] text-[45px] font-light leading-[60px] text-white">MIS Account</Fit>
      <div className="mt-[27px] flex h-[36px] w-[296px] border-2 border-[#66839a]">
        <div className="flex flex-1 items-center bg-white">
          <div className="ml-[8px] h-5 w-px bg-black" />
          <Fit className="w-[62px] text-[15px] text-[#999]">Password</Fit>
        </div>
        <div className="flex w-[31px] items-center justify-center bg-[#335a78]">
          <svg viewBox="0 0 15 14" className="h-[14px] w-[15px]" fill="none" stroke="#fff" strokeWidth="1.200">
            <path d="M0 7h14M7.500.5L14 7l-6.500 6.500" />
          </svg>
        </div>
      </div>
      <svg viewBox="0 0 30 28" className="mb-[33px] mr-[33px] mt-auto h-7 w-[30px] self-end" fill="none" stroke="#fff" strokeWidth="2.200">
        <path d="M11.500 3.700A11.500 11.500 0 1 0 24.500 16" strokeDasharray="7 1.800" />
        <path d="M14 0v13" />
        <path d="M19 12.500h7" />
        <path d="M10 11h8l-4 5zM25 8.500l5 4-5 4z" fill="#fff" stroke="none" />
      </svg>
    </div>
  );
}

export default function App() {
  return (
    <div className="flex h-[1080px] w-[3840px] overflow-hidden font-['Open_Sans','Noto_Sans',sans-serif]">
      <Browser />
      <LoginScreen />
    </div>
  );
}
